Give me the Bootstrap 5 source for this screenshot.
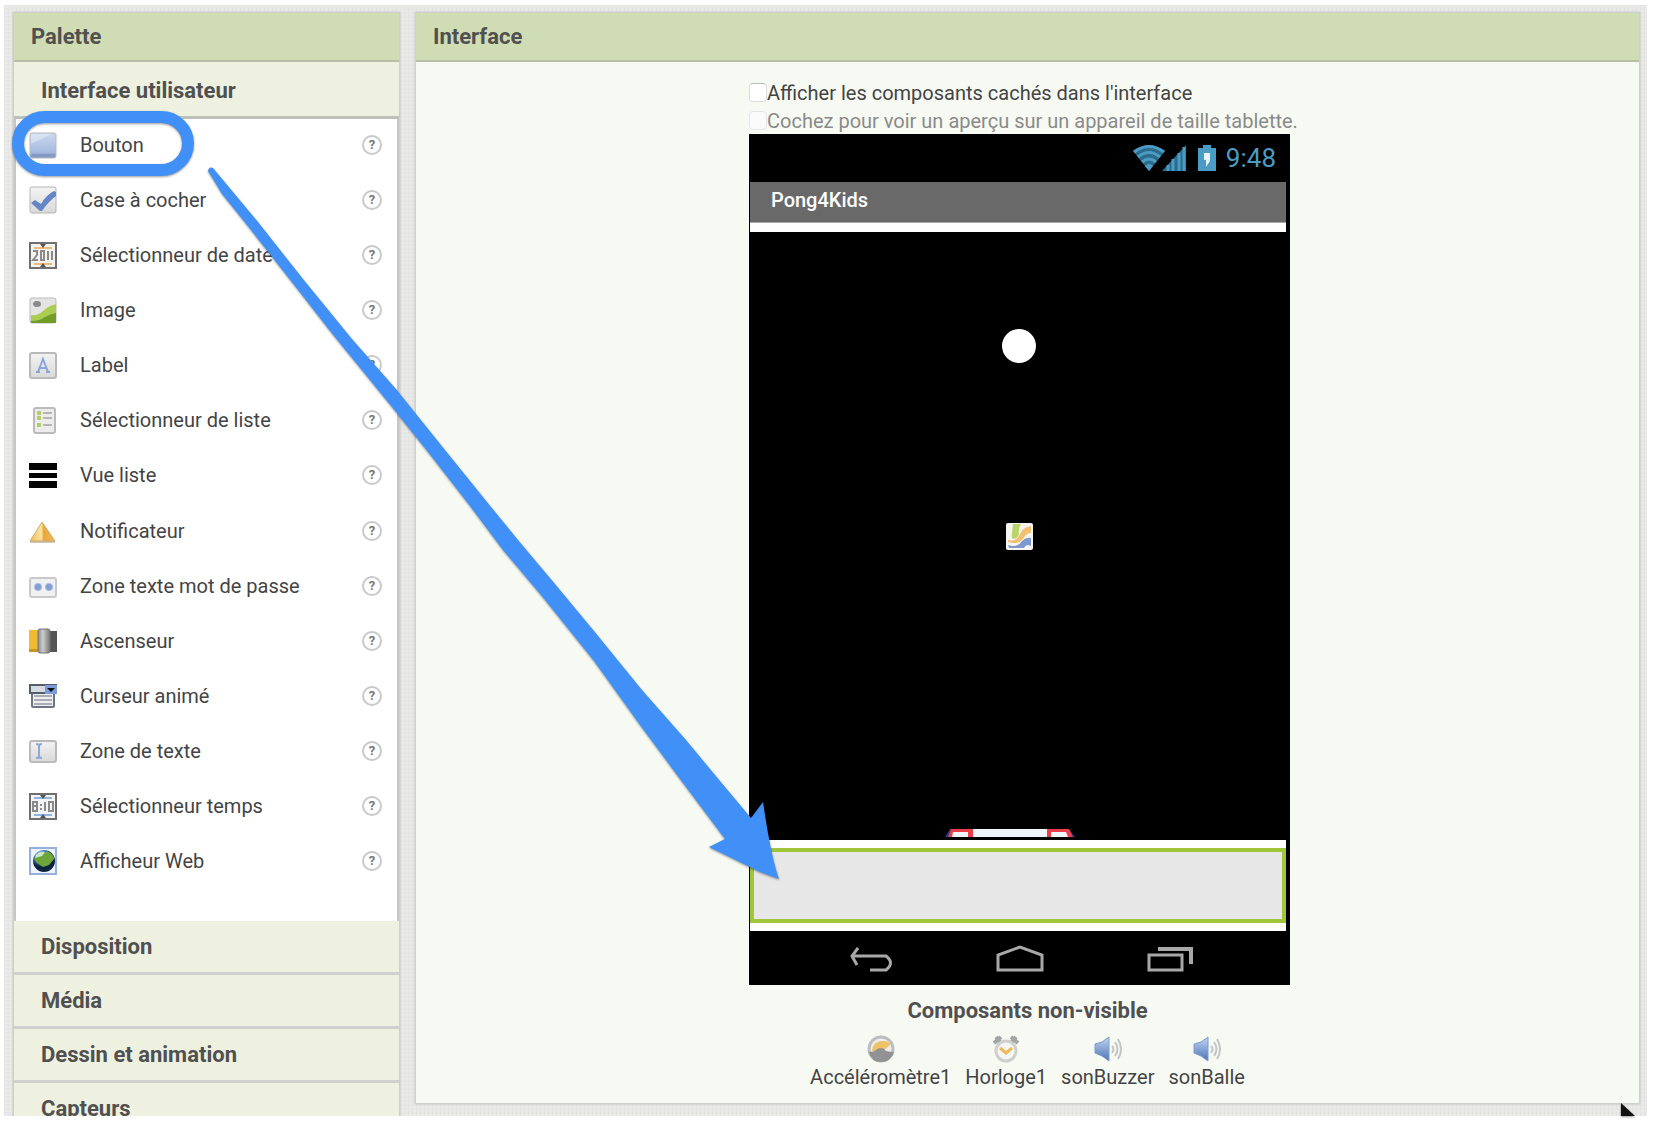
<!DOCTYPE html>
<html lang="fr">
<head>
<meta charset="utf-8">
<meta name="viewport" content="width=device-width, initial-scale=1">
<title>Pong4Kids – Interface</title>
<link href="https://cdn.jsdelivr.net/npm/bootstrap@5.3.0/dist/css/bootstrap.min.css" rel="stylesheet">
<style>
body { font-family: Roboto, "Liberation Sans", sans-serif; font-size: 20px; line-height: 28px; color: #444; background: #fff; }
.workspace {
  height: calc(100vh - 17px); margin: 5px 11px 12px 4px; padding: 7px 7px 12px 9px; gap: 15px;
  background: repeating-linear-gradient(90deg, #00000006 0 1px, #0000 1px 4px), repeating-linear-gradient(0deg, #ffffff20 0 2px, #0000 2px 4px), #e7e7e6;
}
.pane-title { height: 49px; padding: 0 17px; font-size: 22px; line-height: 48px; font-weight: 700; color: #505050; background: #d0dcb3; border-bottom: 2px solid #b7bda6; margin: 0; }
.palette { width: 387px; border: 1px solid #cfcfcf; box-shadow: 0 0 2px #bbb; }
.section-btn { height: 54px; padding: 0 27px; font-size: 22px; font-weight: 700; color: #505050; background: #eef1e0; border: 0; border-bottom: 3px solid #d0d0ce; text-align: left; line-height: 50px; }
.section-open { height: 57px; padding-top: 4px; line-height: 48px; border-bottom-color: #bfbfbc; }
.items { height: 802px; padding-bottom: 30px; background: #fff; border: solid #c6c6c6; border-width: 0 2px; }
.items li { padding: 0 15px 4px 13px; }
.items .glyph { width: 28px; height: 28px; margin-right: 23px; }
.help-btn { width: 20px; height: 20px; border: 2px solid #c9c9c9; border-radius: 50%; background: #fff; color: #777; font-size: 13px; line-height: 16px; font-weight: 700; padding: 0; }
.viewer { background: #f7faf3; border: 1px solid #cfcfcf; box-shadow: 0 0 2px #bbb; min-width: 0; }
.stage { width: 557px; padding-top: 16px; }
.opt { height: 28px; padding-top: 1px; }
.opt input { appearance: none; width: 18px; height: 19px; margin: 0; border: 1px solid #ddd; border-top-color: #bbb; border-radius: 4px; background: #fff; }
.opt input:disabled { border-color: #e6e6e6; background: #fafafa; }
.opt-off { color: #8a8a8a; }
.phone { width: 541px; background: #000; padding: 0 4px 0 1px; }
.statusbar { height: 48px; padding-right: 10px; color: #4a9cc4; font-size: 26px; }
.appbar { height: 41px; background: #696969; color: #fff; padding: 0 21px; font-weight: 500; line-height: 36px; border-bottom: 1px solid #aaa; }
.screen { background: #fff; padding: 9px 0 8px; }
.playfield { height: 608px; background: #000; margin-bottom: 8px; }
.sprite { position: absolute; }
.ball { left: 252px; top: 97px; }
.picture { left: 256px; top: 291px; }
.paddle { left: 195px; top: 597px; }
.dropzone { height: 75px; border: 4px solid #a0c43a; background: #e7e7e7; }
.navbar-keys { height: 54px; padding: 2px 93px 0 99px; }
.navbar-keys button, .hidden-part { background: none; border: 0; padding: 0; color: inherit; }
.hidden-title { font-size: 22px; font-weight: 700; color: #505050; padding-top: 12px; }
.hidden-list { gap: 14px; padding-top: 10px; }
.annotation { position: absolute; left: 0; top: 0; pointer-events: none; filter: drop-shadow(0 1px 1px #0006); }
</style>
</head>
<body class="overflow-hidden position-relative">
<svg width="0" height="0" class="position-absolute">
  <defs>
    <linearGradient id="blue" x2="0" y2="1"><stop stop-color="#cbd8ee"/><stop offset=".75" stop-color="#a6bbdf"/><stop offset="1" stop-color="#7f97c5"/></linearGradient>
    <linearGradient id="grey" x2="0" y2="1"><stop stop-color="#f3f3f3"/><stop offset="1" stop-color="#d9d9d9"/></linearGradient>
    <linearGradient id="gold"><stop stop-color="#f0bd55"/><stop offset=".45" stop-color="#fbe3a0"/><stop offset=".55" stop-color="#e9a63e"/><stop offset="1" stop-color="#f0bd55"/></linearGradient>
    <linearGradient id="speaker" x2="0" y2="1"><stop stop-color="#c3d5f1"/><stop offset="1" stop-color="#4a74b8"/></linearGradient>
    <linearGradient id="metal"><stop stop-color="#888"/><stop offset=".4" stop-color="#ccc"/><stop offset="1" stop-color="#777"/></linearGradient>
    <radialGradient id="globe" cx=".35" cy=".25"><stop stop-color="#d8ecff"/><stop offset=".5" stop-color="#4a8bc8"/><stop offset="1" stop-color="#0c2340"/></radialGradient>
  </defs>
</svg>
<div class="workspace d-flex align-items-start overflow-hidden">
  <aside class="palette flex-shrink-0">
    <h2 class="pane-title">Palette</h2>
    <button class="section-btn section-open d-block w-100" type="button">Interface utilisateur</button>
    <ul class="items list-unstyled d-flex flex-column mb-0">
      <li class="d-flex align-items-center flex-fill"><svg class="glyph" viewBox="0 0 28 28"><rect x="1" y="2" width="26" height="25" rx="2" fill="url(#blue)" stroke="#b9b9b9"/><path d="M2 3h20Q12 8 2 13z" fill="#fff" opacity=".35"/><path d="M2 23h24v3H2z" fill="#8299c6"/></svg><span class="flex-fill">Bouton</span><button class="help-btn" type="button">?</button></li>
      <li class="d-flex align-items-center flex-fill"><svg class="glyph" viewBox="0 0 28 28"><rect x="1" y="1" width="26" height="26" rx="2" fill="url(#grey)" stroke="#b5b5b5"/><path d="M2 17l4-3 6 4Q17 9 25 5l2 1v4Q19 16 13 25h-2z" fill="#6486c4"/></svg><span class="flex-fill">Case à cocher</span><button class="help-btn" type="button">?</button></li>
      <li class="d-flex align-items-center flex-fill"><svg class="glyph" viewBox="0 0 28 28"><rect x="1" y="2" width="26" height="25" fill="#f4f3f0" stroke="#6f6f6f" stroke-width="2"/><path d="M5 7h18M5 23h18" stroke="#edb978" stroke-width="2"/><path d="M14 7l-3-4h6zM14 22l-3 4h6z" fill="#555"/><path d="M4 10h4v4l-4 5h5M12 10v9h3v-9zM19 10v9M23 10v9" fill="none" stroke="#8a8a8a" stroke-width="2"/></svg><span class="flex-fill">Sélectionneur de date</span><button class="help-btn" type="button">?</button></li>
      <li class="d-flex align-items-center flex-fill"><svg class="glyph" viewBox="0 0 28 28"><rect x="1" y="2" width="26" height="25" rx="2" fill="#e4e4e4" stroke="#bbb"/><ellipse cx="8" cy="8" rx="4" ry="3" fill="#8a8a8a"/><path d="M2 19q7 1 12-4t13-7v19H2z" fill="#a9ce52"/><path d="M2 25q9 0 14-4 5-3 11-4v10H2z" fill="#719d27"/></svg><span class="flex-fill">Image</span><button class="help-btn" type="button">?</button></li>
      <li class="d-flex align-items-center flex-fill"><svg class="glyph" viewBox="0 0 28 28"><rect x="1" y="2" width="26" height="25" rx="2" fill="url(#grey)" stroke="#b9b9b9" stroke-width="2"/><path d="M9 21l5-13 5 13M11 17h6M7 21h4M17 21h4" fill="none" stroke="#89a6da" stroke-width="2"/></svg><span class="flex-fill">Label</span><button class="help-btn" type="button">?</button></li>
      <li class="d-flex align-items-center flex-fill"><svg class="glyph" viewBox="0 0 28 28"><rect x="5" y="2" width="21" height="25" rx="2" fill="#ececea" stroke="#bbb" stroke-width="2"/><path d="M8 7h4M8 12h4M8 19h4" stroke="#b4cf62" stroke-width="4"/><path d="M14 7h9M14 12h9M14 19h9" stroke="#b5b5b5" stroke-width="2"/></svg><span class="flex-fill">Sélectionneur de liste</span><button class="help-btn" type="button">?</button></li>
      <li class="d-flex align-items-center flex-fill"><svg class="glyph" viewBox="0 0 28 28"><path d="M0 2h28v7H0zM0 12h28v5H0zM0 20h28v7H0z" fill="#050505"/></svg><span class="flex-fill">Vue liste</span><button class="help-btn" type="button">?</button></li>
      <li class="d-flex align-items-center flex-fill"><svg class="glyph" viewBox="0 0 28 28"><path d="M13 5l-12 19h25z" fill="url(#gold)" stroke="#d2ac6c"/><path d="M1 25h25" stroke="#a8926c"/></svg><span class="flex-fill">Notificateur</span><button class="help-btn" type="button">?</button></li>
      <li class="d-flex align-items-center flex-fill"><svg class="glyph" viewBox="0 0 28 28"><rect x="1" y="6" width="26" height="19" rx="2" fill="#f0f0f0" stroke="#c9c9c9" stroke-width="2"/><circle cx="9" cy="15" r="4" fill="#a9bde2"/><circle cx="20" cy="15" r="4" fill="#a9bde2"/><circle cx="9" cy="15" r="3" fill="#819fd4"/><circle cx="20" cy="15" r="3" fill="#819fd4"/></svg><span class="flex-fill">Zone texte mot de passe</span><button class="help-btn" type="button">?</button></li>
      <li class="d-flex align-items-center flex-fill"><svg class="glyph" viewBox="0 0 28 28"><path d="M0 3h10v22H0z" fill="#eebb32"/><path d="M0 22h10v3H0z" fill="#c99420"/><path d="M19 4h9v21h-9z" fill="#555"/><rect x="9" y="2" width="12" height="24" rx="2" fill="url(#metal)" stroke="#777"/></svg><span class="flex-fill">Ascenseur</span><button class="help-btn" type="button">?</button></li>
      <li class="d-flex align-items-center flex-fill"><svg class="glyph" viewBox="0 0 28 28"><rect x="3" y="9" width="22" height="16" rx="1" fill="#eee" stroke="#6e7585" stroke-width="2"/><path d="M5 14h18M5 18h18M5 22h18" stroke="#a8adb8" stroke-width="2"/><rect x="1" y="3" width="26" height="8" fill="#d6dae2" stroke="#555d6b" stroke-width="2"/><path d="M16 3h12v9H16z" fill="#7c9bd8"/><path d="M18 6h8l-4 4z" fill="#111"/></svg><span class="flex-fill">Curseur animé</span><button class="help-btn" type="button">?</button></li>
      <li class="d-flex align-items-center flex-fill"><svg class="glyph" viewBox="0 0 28 28"><rect x="1" y="4" width="26" height="21" rx="2" fill="url(#grey)" stroke="#bababa" stroke-width="2"/><path d="M7 7q3 0 3 2 0-2 3-2M10 9v11M7 21q3 0 3-2 0 2 3 2" fill="none" stroke="#8fa9d5" stroke-width="2"/></svg><span class="flex-fill">Zone de texte</span><button class="help-btn" type="button">?</button></li>
      <li class="d-flex align-items-center flex-fill"><svg class="glyph" viewBox="0 0 28 28"><rect x="1" y="2" width="26" height="25" fill="#f2f4f6" stroke="#6f6f6f" stroke-width="2"/><path d="M5 6h18M5 23h18" stroke="#8cb4dc" stroke-width="2"/><path d="M14 7l-3-4h6zM14 22l-3 4h6z" fill="#555"/><path d="M4 10h4v9H4zM4 14h4M12 12v2M12 16v2M16 10v9M20 10h4v9h-4z" fill="none" stroke="#8a8a8a" stroke-width="2"/></svg><span class="flex-fill">Sélectionneur temps</span><button class="help-btn" type="button">?</button></li>
      <li class="d-flex align-items-center flex-fill"><svg class="glyph" viewBox="0 0 28 28"><rect x="1" y="1" width="26" height="26" fill="#eef4fb" stroke="#95b0da" stroke-width="2"/><circle cx="15" cy="14" r="11" fill="url(#globe)"/><path d="M5 12q3-5 8-4l5-4q7 3 7 8l-5 6-6 2-6-4z" fill="#6ea53a"/><path d="M7 8q4-4 9-3l-3 4-7 2z" fill="#cfe6c0"/></svg><span class="flex-fill">Afficheur Web</span><button class="help-btn" type="button">?</button></li>
    </ul>
    <button class="section-btn d-block w-100" type="button">Disposition</button>
    <button class="section-btn d-block w-100" type="button">Média</button>
    <button class="section-btn d-block w-100" type="button">Dessin et animation</button>
    <button class="section-btn d-block w-100" type="button">Capteurs</button>
  </aside>
  <main class="viewer flex-fill align-self-stretch">
    <h2 class="pane-title">Interface</h2>
    <div class="stage mx-auto">
      <div class="opt d-flex align-items-center"><input type="checkbox" id="show-hidden"><label class="text-nowrap" for="show-hidden">Afficher les composants cachés dans l'interface</label></div>
      <div class="opt opt-off d-flex align-items-center"><input type="checkbox" id="tablet" disabled><label class="text-nowrap" for="tablet">Cochez pour voir un aperçu sur un appareil de taille tablette.</label></div>
      <div class="phone">
        <div class="statusbar d-flex align-items-center justify-content-end">
          <svg width="86" height="28" viewBox="0 0 86 28" class="me-2">
            <path d="M1 7Q17-4 33 7L17 27z" fill="#2b6b8c"/>
            <path d="M2 8Q17-3 32 8M6 13Q17 4 28 13M10 18q7-6 14 0" fill="none" stroke="#4a9cc4" stroke-width="3"/><path d="M13 22q4-4 8 0l-4 5z" fill="#4a9cc4"/>
            <path d="M30 27L54 1v26z" fill="#2b6b8c"/><path d="M36 27v-6M41 27V15M47 27V9M52 27V3" stroke="#4a9cc4" stroke-width="3"/>
            <path d="M66 4h5V1h8v3h5v23H66z" fill="#4a9cc4"/><path d="M72 9h6v8l-4 6v-7h-2z" fill="#e6f3f8"/>
          </svg><span>9:48</span>
        </div>
        <div class="appbar">Pong4Kids</div>
        <div class="screen">
          <div class="playfield position-relative overflow-hidden">
            <svg class="sprite ball" width="34" height="34"><circle cx="17" cy="17" r="17" fill="#fff"/></svg>
            <svg class="sprite picture" width="27" height="27" viewBox="0 0 27 27"><rect width="27" height="27" rx="2" fill="#f6f5f0"/><path d="M7 1h8q-3 5-2 10-1 5-6 5-2-2-1-6z" fill="#b9d569"/><path d="M2 17q9 2 12-6 3-7 11-8v7q-5 0-8 6-5 6-15 3z" fill="#f2c06e"/><path d="M2 22q10 3 14-4 4-4 9-3v8q-5-3-7 2H3z" fill="#7c98cf"/></svg>
            <svg class="sprite paddle" width="130" height="8" viewBox="0 0 130 8"><path d="M0 8L5 0h119l6 8z" fill="#223a8a"/><path d="M3 8L6 0h118l4 8z" fill="#ec3d48"/><path d="M7 8l1-5h15v5zM106 8V3h15l2 5zM28 0h74v8H28z" fill="#f1f6fa"/></svg>
          </div>
          <div class="dropzone"></div>
        </div>
        <div class="navbar-keys d-flex align-items-center justify-content-between">
          <button type="button" aria-label="Retour"><svg class="d-block" width="44" height="28" viewBox="0 0 44 28" fill="none" stroke="#a8a8a8" stroke-width="3"><path d="M9 3L3 11l5 9M3 11h34q9 7 0 14H21"/></svg></button>
          <button type="button" aria-label="Accueil"><svg class="d-block" width="48" height="28" viewBox="0 0 48 28" fill="none" stroke="#a8a8a8" stroke-width="3"><path d="M2 25V10L24 2l22 8v15z"/></svg></button>
          <button type="button" aria-label="Applications"><svg class="d-block" width="46" height="28" viewBox="0 0 46 28" fill="none" stroke="#a8a8a8" stroke-width="4"><path d="M2 10h33v15H2z" stroke-width="3"/><path d="M11 4h33v15"/></svg></button>
        </div>
      </div>
      <div class="hidden-title text-center">Composants non-visible</div>
      <div class="hidden-list d-flex justify-content-center">
        <button type="button" class="hidden-part d-flex flex-column align-items-center"><svg width="28" height="28" viewBox="0 0 28 28"><circle cx="14" cy="14" r="12" fill="#ededed" stroke="#bdbdbd" stroke-width="3"/><path d="M5 16Q6 6 15 6t8 4l-7 6z" fill="#efc267"/><path d="M2 17q6 0 8-3 6-3 9 2 4 1 8 1-3 10-13 10T2 17z" fill="#929292"/></svg><span>Accéléromètre1</span></button>
        <button type="button" class="hidden-part d-flex flex-column align-items-center"><svg width="28" height="28" viewBox="0 0 28 28"><path d="M2 8l7-6M19 2l7 6M8 7l-4-5M20 7l4-5" stroke="#a4a4a4" stroke-width="4"/><circle cx="14" cy="16" r="10" fill="#f5f5f3" stroke="#cfcfcf" stroke-width="3"/><path d="M8 13l6 5 6-5" fill="none" stroke="#edba58" stroke-width="3"/></svg><span>Horloge1</span></button>
        <button type="button" class="hidden-part d-flex flex-column align-items-center"><svg width="28" height="28" viewBox="0 0 28 28"><path d="M1 9l7-2 7-5v24l-7-5-7-3z" fill="url(#speaker)" stroke="#7d9ccc"/><path d="M18 11q3 3 0 7M21 7q5 7 0 14M24 4q6 10 0 20" fill="none" stroke="#c4c4c4" stroke-width="2"/></svg><span>sonBuzzer</span></button>
        <button type="button" class="hidden-part d-flex flex-column align-items-center"><svg width="28" height="28" viewBox="0 0 28 28"><path d="M1 9l7-2 7-5v24l-7-5-7-3z" fill="url(#speaker)" stroke="#7d9ccc"/><path d="M18 11q3 3 0 7M21 7q5 7 0 14M24 4q6 10 0 20" fill="none" stroke="#c4c4c4" stroke-width="2"/></svg><span>sonBalle</span></button>
      </div>
    </div>
  </main>
</div>
<svg class="annotation" width="800" height="900" viewBox="0 0 800 900" aria-hidden="true">
  <rect x="18" y="117" width="170" height="53" rx="27" fill="none" stroke="#4090f7" stroke-width="12"/>
  <path d="M208 171Q209 166 213 168L258 222 303 279 352 339 396 389 441 445 487 502 518 540 555 584 594 631 642 690 686 740 720 781 751 818 763 802Q771 857 779 879L760 872 709 847 725 839 680 779 640 725 594 661 541 595 503 550 470 506 428 452 396 412 334 336 291 281 243 220 222 194z" fill="#4090f7"/>
</svg>
<svg class="annotation" style="left:1620px;top:1103px" width="16" height="13" aria-hidden="true"><path d="M1 0l14 13H1z" fill="#111"/></svg>
<script src="https://cdn.jsdelivr.net/npm/bootstrap@5.3.0/dist/js/bootstrap.bundle.min.js"></script>
</body>
</html>
